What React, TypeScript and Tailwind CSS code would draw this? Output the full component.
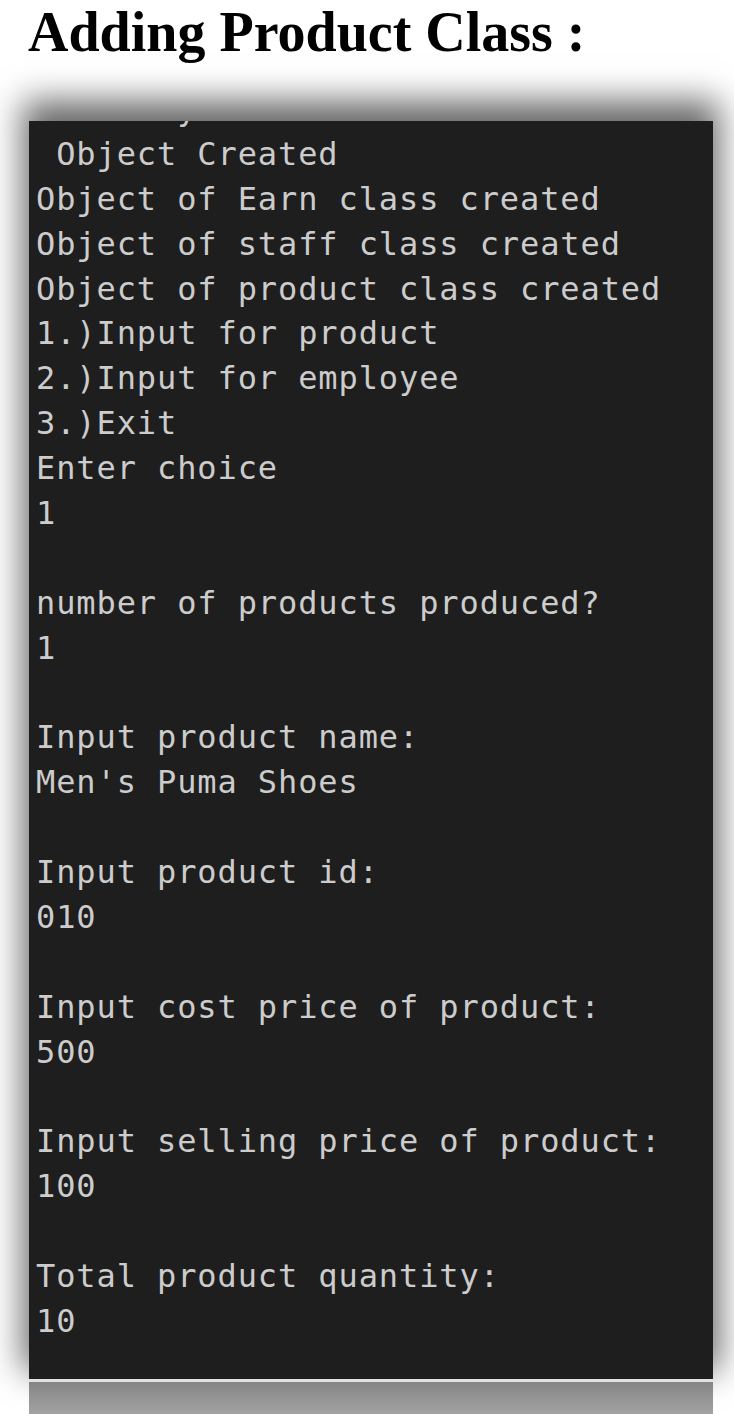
const lines = [
  " Library",
  " Object Created",
  "Object of Earn class created",
  "Object of staff class created",
  "Object of product class created",
  "1.)Input for product",
  "2.)Input for employee",
  "3.)Exit",
  "Enter choice",
  "1",
  "",
  "number of products produced?",
  "1",
  "",
  "Input product name:",
  "Men's Puma Shoes",
  "",
  "Input product id:",
  "010",
  "",
  "Input cost price of product:",
  "500",
  "",
  "Input selling price of product:",
  "100",
  "",
  "Total product quantity:",
  "10",
];

export default function App() {
  return (
    <div className="w-[734px] h-[1414px] bg-white overflow-hidden">
      {/* Heading */}
      <h1 className="pl-[28px] pt-[1px] h-[121px] text-[56px] leading-[62px] font-bold text-black font-['Liberation_Serif',serif]">
        Adding Product Class :
      </h1>

      {/* Console output */}
      <div className="ml-[29px] mr-[21px] h-[1258px] bg-[#1e1e1e] overflow-hidden shadow-[0_-14px_32px_6px_rgba(0,0,0,0.6)]">
        <div className="mt-[-34px] pl-[7px] text-[32px] leading-[44.9px] tracking-[0.9px] text-[#cccccc] whitespace-pre font-['DejaVu_Sans_Mono',monospace]">
          {lines.map((line, i) => (
            <div key={i} className="h-[44.9px]">
              {line}
            </div>
          ))}
        </div>
      </div>

      <div className="ml-[29px] mr-[21px] h-[3px] bg-[#e2e2e2]" />
      <div className="ml-[29px] mr-[21px] h-[32px] bg-gradient-to-b from-[#858585] to-[#a3a3a3]" />
    </div>
  );
}
